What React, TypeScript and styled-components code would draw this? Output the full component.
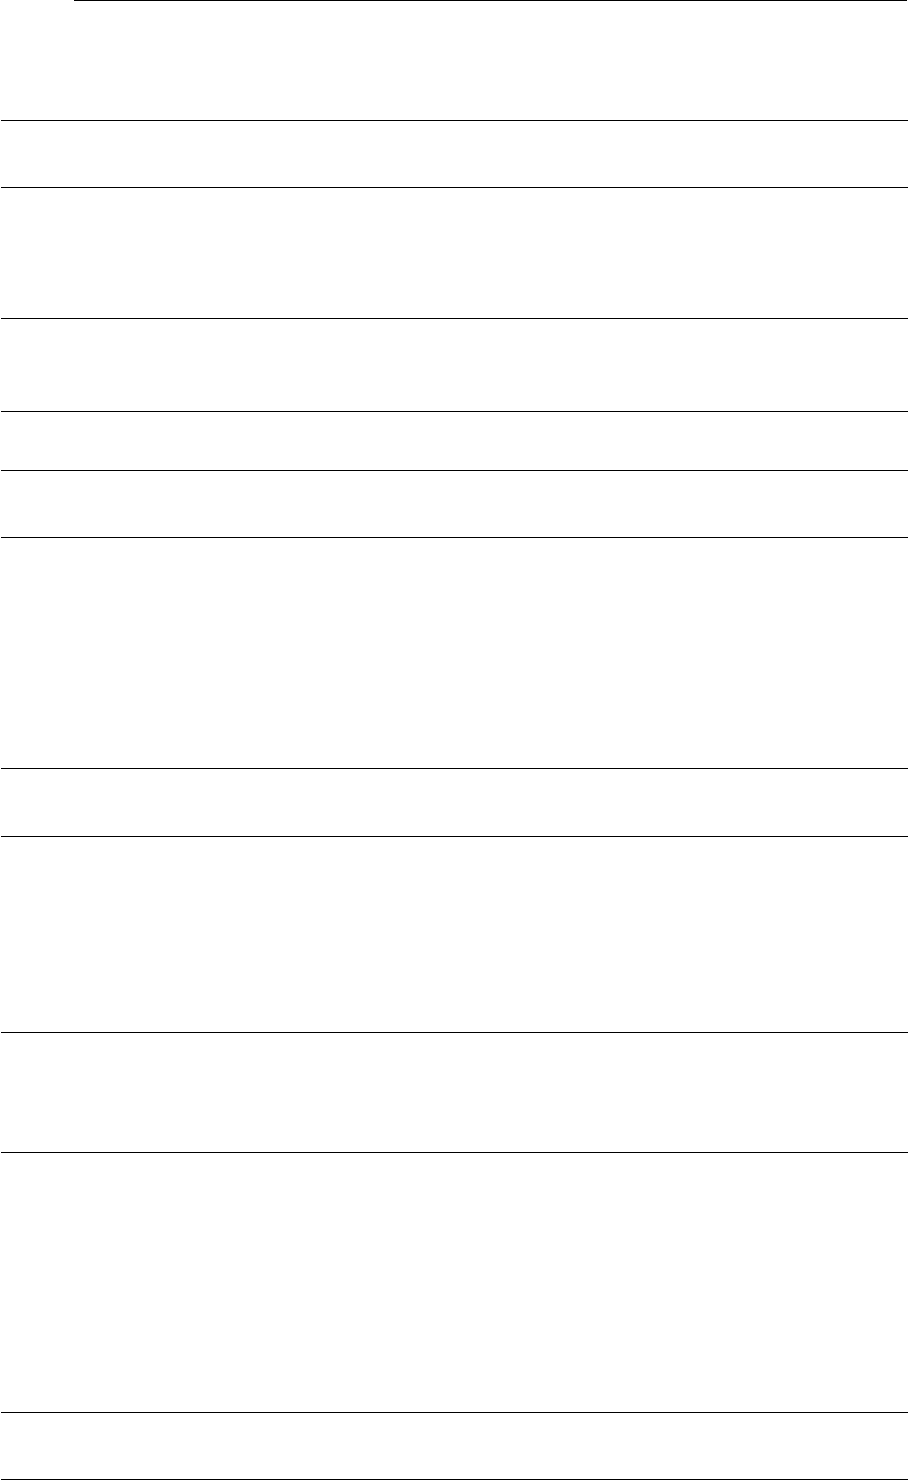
import React from "react";
import styled, { createGlobalStyle } from "styled-components";

const GlobalStyle = createGlobalStyle`
    html, body {
        margin: 0;
        padding: 0;
        background: #fff;
        font-family: "Liberation Sans", Arial, sans-serif;
    }
`;

const Page = styled.div`
    display: flex;
    flex-direction: column;
    width: 908px;
    padding-left: 1px;
    box-sizing: border-box;
`;

const Header = styled.div`
    display: flex;
    flex-direction: column;
    height: 120px;
    padding-left: 73px;
    padding-right: 1px;
`;

const HeaderRule = styled.div`
    height: 1px;
    background: #000;
`;

const Section = styled.div<{ $height: number }>`
    height: ${(props) => props.$height}px;
    border-top: 1px solid #000;
    box-sizing: border-box;
`;

const LastRule = styled.div`
    height: 1px;
    background: #000;
`;

// spacing between the rules, top to bottom
const sections = [67, 131, 93, 59, 67, 231, 68, 196, 120, 260, 67];

const App = (): JSX.Element => {
    return (
        <>
            <GlobalStyle />
            <Page>
                <Header>
                    <HeaderRule />
                </Header>
                {sections.map((h, i) => (
                    <Section key={i} $height={h} />
                ))}
                <LastRule />
            </Page>
        </>
    );
};

export default App;
